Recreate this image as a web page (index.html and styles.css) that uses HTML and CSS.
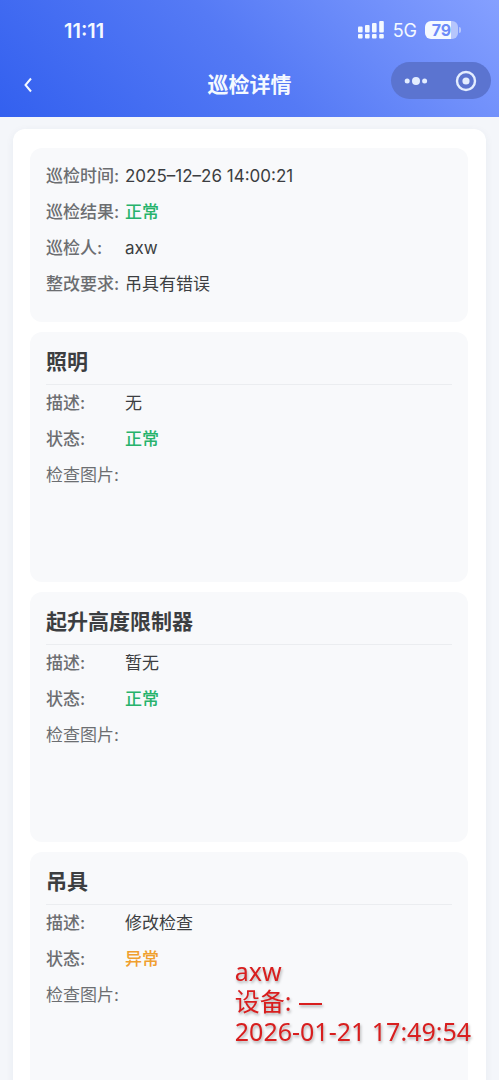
FILE: index.html
```html
<!DOCTYPE html>
<html lang="zh-CN">
<head>
<meta charset="utf-8">
<meta name="viewport" content="width=device-width, initial-scale=1">
<title>巡检详情</title>
<link rel="stylesheet" href="styles.css">
</head>
<body>
<div class="app">
  <header class="header">
    <div class="status-bar">
      <span class="clock">11:11</span>
      <div class="indicators">
        <svg class="signal" width="27" height="18" viewBox="0 0 27 18" fill="currentColor" aria-hidden="true">
          <rect x="0" y="5.5" width="4.6" height="6" rx="1"/><rect x="7" y="4" width="4.6" height="7.5" rx="1"/><rect x="14" y="2" width="4.6" height="9.5" rx="1"/><rect x="21.2" y="0" width="4.6" height="11.5" rx="1"/>
          <rect x="0" y="13" width="4.6" height="4.6" rx="1"/><rect x="7" y="13" width="4.6" height="4.6" rx="1"/><rect x="14" y="13" width="4.6" height="4.6" rx="1"/><rect x="21.2" y="13" width="4.6" height="4.6" rx="1"/>
        </svg>
        <span class="network">5G</span>
        <span class="battery">79</span>
      </div>
    </div>
    <div class="nav-bar">
      <button class="back" type="button" aria-label="返回">
        <svg width="10" height="16" viewBox="0 0 10 16" fill="none" stroke="currentColor" stroke-width="2" aria-hidden="true"><path d="M8 1.5 L2.5 8 L8 14.5"/></svg>
      </button>
      <h1 class="nav-title">巡检详情</h1>
      <div class="capsule">
        <button class="capsule-button" type="button" aria-label="更多">
          <svg width="24" height="10" viewBox="0 0 24 10" fill="currentColor" aria-hidden="true"><circle cx="3.2" cy="5" r="2.5"/><circle cx="12" cy="5" r="4"/><circle cx="20.6" cy="5" r="2.5"/></svg>
        </button>
        <button class="capsule-button" type="button" aria-label="关闭">
          <svg width="22" height="22" viewBox="0 0 22 22" aria-hidden="true"><circle cx="11" cy="11" r="9" fill="none" stroke="currentColor" stroke-width="2.4"/><circle cx="11" cy="11" r="3.6" fill="currentColor"/></svg>
        </button>
      </div>
    </div>
  </header>

  <main class="content">
    <div class="panel">
      <section class="card summary">
        <dl class="rows">
          <div class="row"><dt>巡检时间:</dt><dd>2025–12–26 14:00:21</dd></div>
          <div class="row"><dt>巡检结果:</dt><dd class="ok">正常</dd></div>
          <div class="row"><dt>巡检人:</dt><dd>axw</dd></div>
          <div class="row"><dt>整改要求:</dt><dd>吊具有错误</dd></div>
        </dl>
      </section>

      <section class="card item">
        <h2 class="card-title">照明</h2>
        <dl class="rows">
          <div class="row"><dt>描述:</dt><dd>无</dd></div>
          <div class="row"><dt>状态:</dt><dd class="ok">正常</dd></div>
          <div class="row photos"><dt>检查图片:</dt><dd></dd></div>
        </dl>
      </section>

      <section class="card item">
        <h2 class="card-title">起升高度限制器</h2>
        <dl class="rows">
          <div class="row"><dt>描述:</dt><dd>暂无</dd></div>
          <div class="row"><dt>状态:</dt><dd class="ok">正常</dd></div>
          <div class="row photos"><dt>检查图片:</dt><dd></dd></div>
        </dl>
      </section>

      <section class="card item">
        <h2 class="card-title">吊具</h2>
        <dl class="rows">
          <div class="row"><dt>描述:</dt><dd>修改检查</dd></div>
          <div class="row"><dt>状态:</dt><dd class="warn">异常</dd></div>
          <div class="row photos"><dt>检查图片:</dt><dd></dd></div>
        </dl>
      </section>
    </div>
  </main>

  <p class="watermark">axw<br>设备: —<br>2026-01-21 17:49:54</p>
</div>
</body>
</html>
```

FILE: styles.css
```css
* {
  box-sizing: border-box;
}

body {
  margin: 0;
  font-family: Inter, "Noto Sans CJK SC", sans-serif;
  font-size: 17px;
  color: #3c3e41;
  background: #f4f6fa;
}

h1,
h2,
dl,
dd,
p {
  margin: 0;
}

button {
  display: flex;
  align-items: center;
  justify-content: center;
  padding: 0;
  border: 0;
  background: none;
  color: inherit;
}

.app {
  display: flex;
  flex-direction: column;
  height: 100vh;
  overflow: hidden;
}

/* Header */
.header {
  flex: none;
  padding: 10px 8px 14px;
  color: #f4f9ff;
  background: linear-gradient(45deg, #3360ef 0%, #557af5 50%, #85a0ff 100%);
}

.status-bar {
  display: flex;
  align-items: center;
  justify-content: space-between;
  height: 40px;
  padding: 0 33px 0 56px;
}

.clock {
  padding-top: 1px;
  font-size: 20px;
  font-weight: 600;
}

.indicators {
  display: flex;
  align-items: center;
  gap: 8px;
}

.network {
  font-size: 18px;
}

.battery {
  position: relative;
  width: 33px;
  border-radius: 6px;
  font-size: 16px;
  font-weight: 700;
  line-height: 18px;
  text-align: center;
  color: #6c8bf8;
  background: linear-gradient(to right, #f4f9ff 79%, #b6c6fc 79%);
}

.battery::after {
  content: "";
  position: absolute;
  top: 6px;
  right: -3px;
  width: 2px;
  height: 6px;
  border-radius: 0 2px 2px 0;
  background: #b6c6fc;
}

.nav-bar {
  display: grid;
  grid-template-columns: 1fr auto 1fr;
  align-items: center;
  margin-top: 12px;
}

.back {
  justify-self: start;
  width: 40px;
  height: 32px;
  margin-top: 4px;
}

.nav-title {
  padding-top: 4px;
  font-size: 21px;
  font-weight: 600;
  line-height: 32px;
}

.capsule {
  justify-self: end;
  display: flex;
  width: 100px;
  height: 37px;
  margin-bottom: 4px;
  border-radius: 19px;
  color: #e3edff;
  background: #5b74d0;
}

.capsule-button {
  flex: 1;
}

/* Content */
.content {
  flex: 1;
  min-height: 0;
  padding: 12px 13px;
  overflow: hidden;
}

.panel {
  display: flex;
  flex-direction: column;
  gap: 10px;
  padding: 19px 18px 19px 17px;
  border-radius: 12px;
  background: #fff;
  box-shadow: 0 2px 8px rgba(40, 60, 110, 0.06);
}

.card {
  padding: 10px 16px 20px;
  border-radius: 12px;
  background: #f8f9fb;
}

.card-title {
  padding: 5px 0 7px;
  border-bottom: 1px solid #ebedf0;
  font-size: 21px;
  font-weight: 700;
  line-height: 30px;
}

.row {
  display: flex;
  line-height: 36px;
}

.row dt {
  flex: none;
  width: 79px;
  font-weight: 500;
  color: #6c6e71;
  white-space: nowrap;
}

.row dd {
  flex: 1;
}

.row .ok {
  font-weight: 500;
  color: #27b36b;
}

.row .warn {
  font-weight: 500;
  color: #f09f2e;
}

.row.photos {
  min-height: 105px;
}

.row.photos dt {
  font-weight: 400;
}

/* Watermark */
.watermark {
  position: fixed;
  right: 28px;
  bottom: 34px;
  font-family: "Noto Sans", "Noto Sans CJK SC", sans-serif;
  font-size: 25px;
  line-height: 30px;
  color: #d81e1e;
  text-shadow: 1px 2px 3px rgba(0, 0, 0, 0.3);
  pointer-events: none;
}
```
